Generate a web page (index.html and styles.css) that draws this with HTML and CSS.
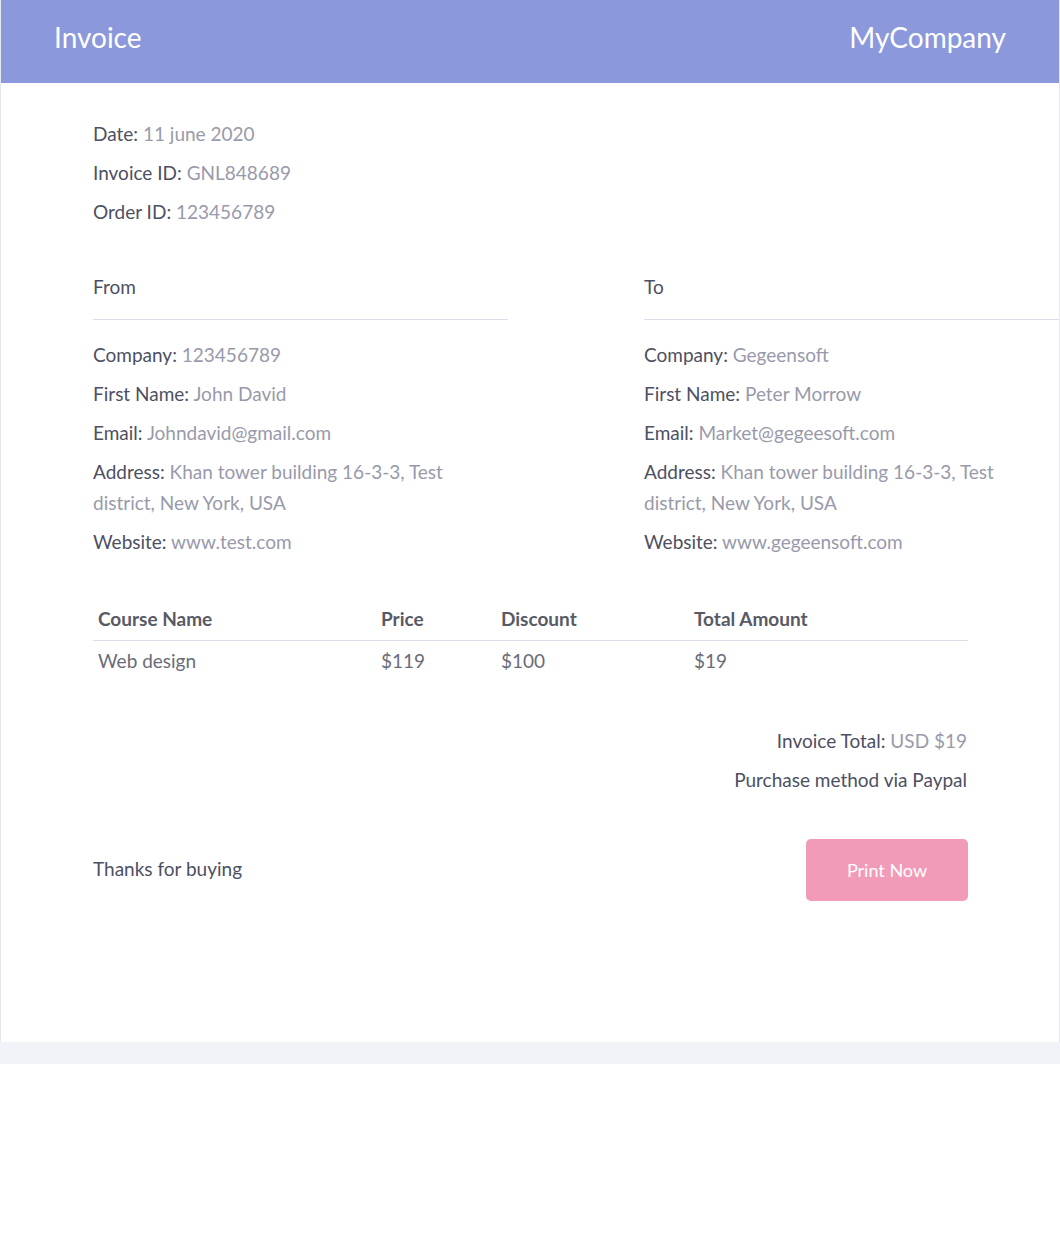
FILE: index.html
```html
<!DOCTYPE html>
<html>
<head>
<meta charset="utf-8">
<link rel="stylesheet" href="styles.css">
</head>
<body>
<div class="page">
  <div class="card">
    <header class="topbar">
      <h1 class="title">Invoice</h1>
      <div class="brand">MyCompany</div>
    </header>
    <main class="content">
      <section class="meta">
        <p class="row"><span class="lbl">Date:</span> <span class="val">11 june 2020</span></p>
        <p class="row"><span class="lbl">Invoice ID:</span> <span class="val">GNL848689</span></p>
        <p class="row"><span class="lbl">Order ID:</span> <span class="val">123456789</span></p>
      </section>
      <section class="parties">
        <div class="party">
          <h2 class="party-head">From</h2>
          <p class="row"><span class="lbl">Company:</span> <span class="val">123456789</span></p>
          <p class="row"><span class="lbl">First Name:</span> <span class="val">John David</span></p>
          <p class="row"><span class="lbl">Email:</span> <span class="val">Johndavid@gmail.com</span></p>
          <p class="row"><span class="lbl">Address:</span> <span class="val">Khan tower building 16-3-3, Test district, New York, USA</span></p>
          <p class="row"><span class="lbl">Website:</span> <span class="val">www.test.com</span></p>
        </div>
        <div class="party">
          <h2 class="party-head">To</h2>
          <p class="row"><span class="lbl">Company:</span> <span class="val">Gegeensoft</span></p>
          <p class="row"><span class="lbl">First Name:</span> <span class="val">Peter Morrow</span></p>
          <p class="row"><span class="lbl">Email:</span> <span class="val">Market@gegeesoft.com</span></p>
          <p class="row"><span class="lbl">Address:</span> <span class="val">Khan tower building 16-3-3, Test district, New York, USA</span></p>
          <p class="row"><span class="lbl">Website:</span> <span class="val">www.gegeensoft.com</span></p>
        </div>
      </section>
      <table class="items">
        <thead>
          <tr><th class="c1">Course Name</th><th class="c2">Price</th><th class="c3">Discount</th><th class="c4">Total Amount</th></tr>
        </thead>
        <tbody>
          <tr><td>Web design</td><td>$119</td><td>$100</td><td>$19</td></tr>
        </tbody>
      </table>
      <section class="totals">
        <p class="row"><span class="lbl">Invoice Total:</span> <span class="val">USD $19</span></p>
        <p class="row"><span class="lbl">Purchase method via Paypal</span></p>
      </section>
      <section class="footer">
        <p class="thanks">Thanks for buying</p>
        <button class="print">Print Now</button>
      </section>
    </main>
  </div>
</div>
</body>
</html>
```

FILE: styles.css
```css
html, body {
  margin: 0;
  padding: 0;
  background: #ffffff;
}
body {
  font-family: "Lato", "Open Sans", sans-serif;
}
.page {
  background: #f0f3f8;
  padding-bottom: 22px;
  width: 1060px;
}
.card {
  background: #ffffff;
  border-left: 1px solid #e6e8ee;
  border-right: 1px solid #e6e8ee;
  height: 1042px;
  box-sizing: border-box;
}
.topbar {
  background: #8c98dc;
  height: 83px;
  display: flex;
  align-items: center;
  justify-content: space-between;
  padding: 0 53px 0 53px;
  box-sizing: border-box;
}
.title, .brand {
  margin: 0;
  font-weight: 400;
  font-size: 28px;
  color: #ffffff;
  line-height: 1;
  margin-top: -9px;
}
.content {
  padding: 35px 92px 0 92px;
}
.row {
  margin: 0 0 8px 0;
  font-size: 19px;
  line-height: 31px;
}
.lbl {
  color: #4d5062;
}
.val {
  color: #989aab;
}
.meta {
  margin-bottom: 44px;
}
.parties {
  display: grid;
  grid-template-columns: 415px 415px;
  column-gap: 136px;
}
.party-head {
  margin: 0 0 19px 0;
  font-size: 19px;
  font-weight: 400;
  line-height: 31px;
  color: #4d5062;
  padding-bottom: 17px;
  border-bottom: 1px solid #dcdeea;
}
.party .row:last-child {
  margin-bottom: 0;
}
.items {
  width: 875px;
  border-collapse: collapse;
  margin-top: 41px;
}
.items th, .items td {
  text-align: left;
  padding: 10px 5px;
  font-size: 19px;
  line-height: 22px;
}
.items th {
  font-weight: 700;
  color: #585a66;
  border-bottom: 1px solid #dcdeea;
}
.items td {
  color: #6a6c78;
  padding-top: 9px;
}
.c1 { width: 273px; }
.c2 { width: 110px; }
.c3 { width: 183px; }
.totals {
  text-align: right;
  margin-top: 43px;
}
.footer {
  margin-top: 44px;
  display: flex;
  align-items: flex-start;
  justify-content: space-between;
}
.thanks {
  margin: 14px 0 0 0;
  font-size: 19px;
  line-height: 31px;
  color: #4d5062;
}
.print {
  width: 162px;
  height: 62px;
  background: #f29bb9;
  border: none;
  border-radius: 5px;
  color: #ffffff;
  font-family: inherit;
  font-size: 18px;
  margin-right: -1px;
}
```
